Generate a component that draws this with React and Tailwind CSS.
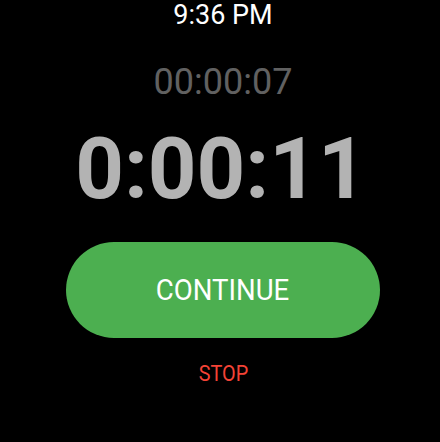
export default function App() {
    return (
        <div className="w-[440px] h-[442px] bg-black flex flex-col items-center pl-[6px] overflow-hidden" style={{ fontFamily: 'Roboto, "Noto Sans", sans-serif' }}>
            {/* Status clock */}
            <div className="mt-[2px] text-[27px] leading-none text-white">9:36 PM</div>

            {/* Lap timer */}
            <div className="mt-[35px] text-[36px] leading-none text-[#616161]">00:00:07</div>

            {/* Main timer */}
            <div className="mt-[27px] -ml-[4px] text-[85px] leading-none font-bold text-[#b3b3b3]">0:00:11</div>

            <button className="mt-[30px] w-[314px] h-[96px] rounded-full bg-[#4caf50] text-white text-[30px] leading-none flex items-center justify-center">
                <span className="inline-block scale-x-[0.92]">CONTINUE</span>
            </button>

            <button className="mt-[25px] text-[22px] leading-none text-[#f44336]">
                <span className="inline-block scale-x-[0.9]">STOP</span>
            </button>
        </div>
    );
}
